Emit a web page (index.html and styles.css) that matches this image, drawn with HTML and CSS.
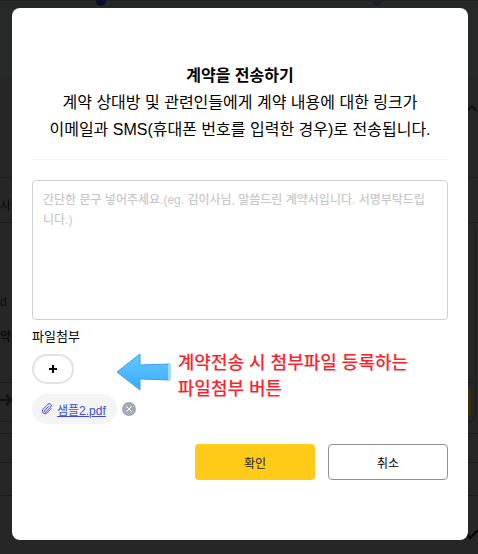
FILE: index.html
```
<!DOCTYPE html>
<html lang="ko">
<head>
    <meta charset="UTF-8">
    <meta name="viewport" content="width=device-width, initial-scale=1">
    <title>계약 전송</title>
    <link rel="stylesheet" href="styles.css">
</head>
<body>
    <!-- Dimmed page under the modal -->
    <div class="page" aria-hidden="true">
        <div class="page-steps">
            <span class="step step-active"></span>
            <span class="step"></span>
        </div>
        <div class="page-title">
            <svg class="chevron" viewBox="0 0 12 8"><path d="M1 7l5-5 5 5"/></svg>
        </div>
        <div class="page-row row-tab">사</div>
        <div class="page-card">
            <div class="page-row row-meta">
                <span>d</span>
                <b>약</b>
            </div>
            <div class="row-field">
                <svg class="arrow-right" viewBox="0 0 12 12"><path d="M0 6h11M6 1l5 5-5 5"/></svg>
                <span class="page-button"></span>
            </div>
        </div>
        <div class="page-row row-line"></div>
        <div class="page-row row-input"></div>
        <div class="page-row row-last"></div>
        <div class="page-foot">
            <svg class="check" viewBox="0 0 12 10"><path d="M1 5l3 4 8-8"/></svg>
        </div>
    </div>

    <div class="modal" role="dialog" aria-modal="true" aria-labelledby="modalTitle">
        <div class="modal-header">
            <h1 id="modalTitle">계약을 전송하기</h1>
            <p>계약 상대방 및 관련인들에게 계약 내용에 대한 링크가<br>이메일과 SMS(휴대폰 번호를 입력한 경우)로 전송됩니다.</p>
        </div>

        <textarea class="message" aria-label="메시지" placeholder="간단한 문구 넣어주세요.(eg. 김이사님, 말씀드린 계약서입니다. 서명부탁드립니다.)"></textarea>

        <div class="attach">
            <div class="attach-main">
                <label class="attach-label" for="addFile">파일첨부</label>
                <button class="btn-add" id="addFile" type="button">
                    <svg viewBox="0 0 8 8"><path d="M4 0v8M0 4h8"/></svg>
                </button>
                <div class="file-row">
                    <div class="file-chip">
                        <svg class="clip" viewBox="0 0 12 12"><path d="M10.500 5.300L6 9.900a2.600 2.600 0 0 1-3.900-3.700l4.800-4.900a1.900 1.900 0 0 1 2.800 2.700L5 8.800a.9.9 0 0 1-1.400-1.300L7.800 3.200"/></svg>
                        <a href="#">샘플2.pdf</a>
                    </div>
                    <button class="btn-remove" type="button" aria-label="파일 삭제">
                        <svg viewBox="0 0 14 14"><circle cx="7" cy="7" r="7"/><path d="M4.500 4.500l5 5M9.500 4.500l-5 5"/></svg>
                    </button>
                </div>
            </div>
            <div class="callout">
                <svg class="callout-arrow" viewBox="0 0 56 38">
                    <defs>
                        <linearGradient id="arrowFill" x1="0" y1="0" x2="0" y2="1">
                            <stop offset="0" stop-color="#64c8fc"/>
                            <stop offset="1" stop-color="#3aabff"/>
                        </linearGradient>
                    </defs>
                    <path d="M1 19L24 1v11l30-1v16l-30-1v11z" fill="url(#arrowFill)" stroke="#3d9df0"/>
                    <path d="M52 11h3v16h-3z" fill="#a8d8f8"/>
                </svg>
                <p>계약전송 시 첨부파일 등록하는<br>파일첨부 버튼</p>
            </div>
        </div>

        <div class="modal-actions">
            <button class="btn btn-confirm" type="button">확인</button>
            <button class="btn btn-cancel" type="button">취소</button>
        </div>
    </div>
</body>
</html>
```

FILE: styles.css
```
* {
    box-sizing: border-box;
}

body {
    min-height: 100vh;
    margin: 0;
    padding: 8px 10px 14px 12px;
    background: #262626;
    color: #000;
    font-family: "Liberation Sans", "Noto Sans CJK KR", sans-serif;
}

button {
    font-family: inherit;
    cursor: pointer;
}

h1,
p {
    margin: 0;
}

/* Dimmed page */
.page {
    position: fixed;
    inset: 0;
    overflow: hidden;
    color: #0c0c0c;
    font-size: 12px;
}

.page-steps {
    display: flex;
    justify-content: space-between;
    height: 77px;
    padding: 0 96px;
    background: #262928;
    border-top: 1px solid #1e2020;
}

.step {
    width: 10px;
    height: 10px;
    margin-top: -5px;
    border-radius: 50%;
    background: #1e2026;
}

.step-active {
    background: #0c0c2c;
}

.page-title {
    height: 101px;
    padding-top: 24px;
    text-align: right;
    border-bottom: 1px solid #202020;
}

.chevron {
    width: 12px;
    height: 8px;
}

.page svg {
    fill: none;
    stroke: #111;
    stroke-width: 2;
}

.page-row {
    border-bottom: 1px solid #1c1c1c;
}

.row-tab {
    height: 45px;
    padding-top: 18px;
}

.page-card {
    margin-right: 2px;
    border: 1px solid #1c1c1c;
    border-width: 0 1px 1px 0;
    border-radius: 0 8px 8px 0;
}

.row-meta {
    display: flex;
    flex-direction: column;
    gap: 18px;
    height: 160px;
    padding-top: 72px;
}

.row-field {
    display: flex;
    justify-content: space-between;
    height: 38px;
    padding: 4px;
    padding-left: 0;
}

.arrow-right {
    width: 12px;
    height: 26px;
}

.page-button {
    width: 12px;
    border-radius: 4px;
    background: #3a2e08;
}

.row-line {
    height: 12px;
}

.row-input {
    height: 29px;
}

.row-last {
    height: 33px;
}

.page-foot {
    padding-top: 30px;
    text-align: right;
}

.check {
    width: 12px;
    height: 16px;
}

.page .check {
    stroke: #000;
}

/* Modal */
.modal {
    position: relative;
    min-height: calc(100vh - 22px);
    padding: 54px 20px 60px;
    background: #fff;
    border-radius: 8px;
}

.modal-header {
    padding-bottom: 16px;
    border-bottom: 1px solid #f4f4f4;
    text-align: center;
    font-size: 16px;
    line-height: 27px;
}

.modal-header h1 {
    font-size: 16px;
    font-weight: 700;
}

.message {
    display: block;
    width: 100%;
    height: 140px;
    margin-top: 20px;
    padding: 9px 16px 9px 10px;
    border: 1px solid #cfcfdc;
    border-radius: 4px;
    font-family: inherit;
    font-size: 12px;
    font-weight: 500;
    line-height: 20px;
    resize: none;
}

.message::placeholder {
    color: #c8c8c8;
}

.attach {
    display: flex;
    margin-top: 7px;
}

.attach-label {
    display: block;
    font-size: 13px;
    line-height: 20px;
}

.btn-add {
    display: flex;
    align-items: center;
    justify-content: center;
    width: 42px;
    height: 30px;
    margin-top: 7px;
    padding: 0;
    background: #fff;
    border: 2px solid #dfe2ea;
    border-radius: 15px;
}

.btn-add svg {
    width: 8px;
    height: 8px;
    stroke: #000;
    stroke-width: 2;
}

.file-row {
    display: flex;
    align-items: center;
    gap: 5px;
    margin-top: 10px;
}

.file-chip {
    display: flex;
    align-items: center;
    gap: 4px;
    height: 30px;
    padding: 0 11px 0 9px;
    background: #f4f4f4;
    border-radius: 15px;
    font-size: 12px;
}

.file-chip a {
    color: #3f48e0;
}

.clip {
    width: 12px;
    height: 12px;
    fill: none;
    stroke: #3f48e0;
    stroke-width: 1;
}

.btn-remove {
    width: 14px;
    height: 14px;
    padding: 0;
    background: none;
    border: 0;
}

.btn-remove svg {
    display: block;
    fill: #a5a8b5;
    stroke-linecap: round;
}

.btn-remove path {
    stroke: #fff;
    stroke-width: 1;
}

.callout {
    display: flex;
    align-items: flex-start;
    gap: 6px;
    margin: 23px 0 0 -20px;
    color: #ff1f2d;
    font-size: 18px;
    font-weight: 500;
    line-height: 26px;
    white-space: nowrap;
}

.callout-arrow {
    width: 56px;
    height: 38px;
    margin-top: 3px;
}

.modal-actions {
    display: flex;
    justify-content: flex-end;
    gap: 13px;
    margin-top: 20px;
}

.btn {
    width: 120px;
    height: 36px;
    border-radius: 4px;
    font-size: 12px;
}

.btn-confirm {
    background: #ffcb18;
    border: 0;
    color: #222;
}

.btn-cancel {
    background: #fff;
    border: 1px solid #929292;
    color: #000;
}
```
